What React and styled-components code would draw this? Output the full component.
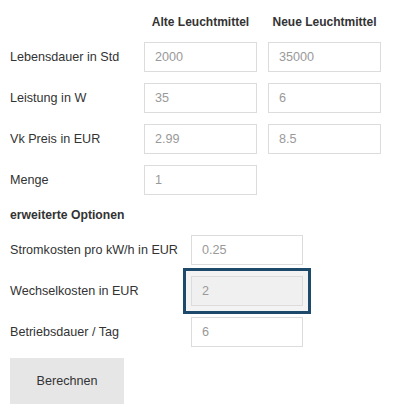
import React from 'react';
import styled, { createGlobalStyle } from 'styled-components';

const GlobalStyle = createGlobalStyle`
  body {
    margin: 0;
    background: #fff;
    font-family: "Liberation Sans", Arial, sans-serif;
    font-size: 12.6px;
    color: #333;
  }
`;

const Page = styled.div`
  padding: 0 10px;
  width: 400px;
  box-sizing: border-box;
`;

const Table = styled.div`
  display: grid;
  grid-template-columns: ${props => props.$columns};
  column-gap: 11px;
  row-gap: 11px;
  align-items: center;
`;

const HeadCell = styled.div`
  height: 31px;
  padding-top: 14px;
  box-sizing: border-box;
  line-height: 16px;
  font-size: 12px;
  font-weight: 700;
  text-align: center;
  white-space: nowrap;
  color: #333;
`;

const Label = styled.label`
  line-height: 16px;
  white-space: nowrap;
  color: #333;
`;

const Field = styled.input`
  width: 100%;
  height: 30px;
  box-sizing: border-box;
  margin: 0;
  padding: 0 10px;
  border: 1px solid #dcdcdc;
  background: ${props => (props.$active ? '#f0f0f0' : '#fff')};
  box-shadow: ${props => (props.$active ? '0 0 0 5px #f3f3f3, 0 0 0 8px #1d4a6b' : 'none')};
  font-family: inherit;
  font-size: 12.6px;
  color: #999;
  outline: none;
`;

const SectionTitle = styled.div`
  margin: 11px 0;
  line-height: 18px;
  font-size: 12.2px;
  font-weight: 700;
  color: #333;
`;

const Button = styled.button`
  margin-top: 11px;
  width: 114px;
  height: 46px;
  border: none;
  background: #e6e6e6;
  font-family: inherit;
  font-size: 12.6px;
  color: #333;
  cursor: pointer;
`;

const mainRows = [
  ['Lebensdauer in Std', '2000', '35000'],
  ['Leistung in W', '35', '6'],
  ['Vk Preis in EUR', '2.99', '8.5'],
];

const extraRows = [
  ['Stromkosten pro kW/h in EUR', '0.25'],
  ['Wechselkosten in EUR', '2', true],
  ['Betriebsdauer / Tag', '6'],
];

export default function App() {
  return (
    <Page>
      <GlobalStyle />
      <Table $columns="123px 113px 113px">
        <HeadCell />
        <HeadCell>Alte Leuchtmittel</HeadCell>
        <HeadCell>Neue Leuchtmittel</HeadCell>
        {mainRows.map(([label, alt, neu]) => (
          <React.Fragment key={label}>
            <Label>{label}</Label>
            <Field defaultValue={alt} />
            <Field defaultValue={neu} />
          </React.Fragment>
        ))}
        <Label>Menge</Label>
        <Field defaultValue="1" />
        <span />
      </Table>

      <SectionTitle>erweiterte Optionen</SectionTitle>

      <Table $columns="170px 112px">
        {extraRows.map(([label, value, active]) => (
          <React.Fragment key={label}>
            <Label>{label}</Label>
            <Field defaultValue={value} $active={active} />
          </React.Fragment>
        ))}
      </Table>

      <Button>Berechnen</Button>
    </Page>
  );
}
